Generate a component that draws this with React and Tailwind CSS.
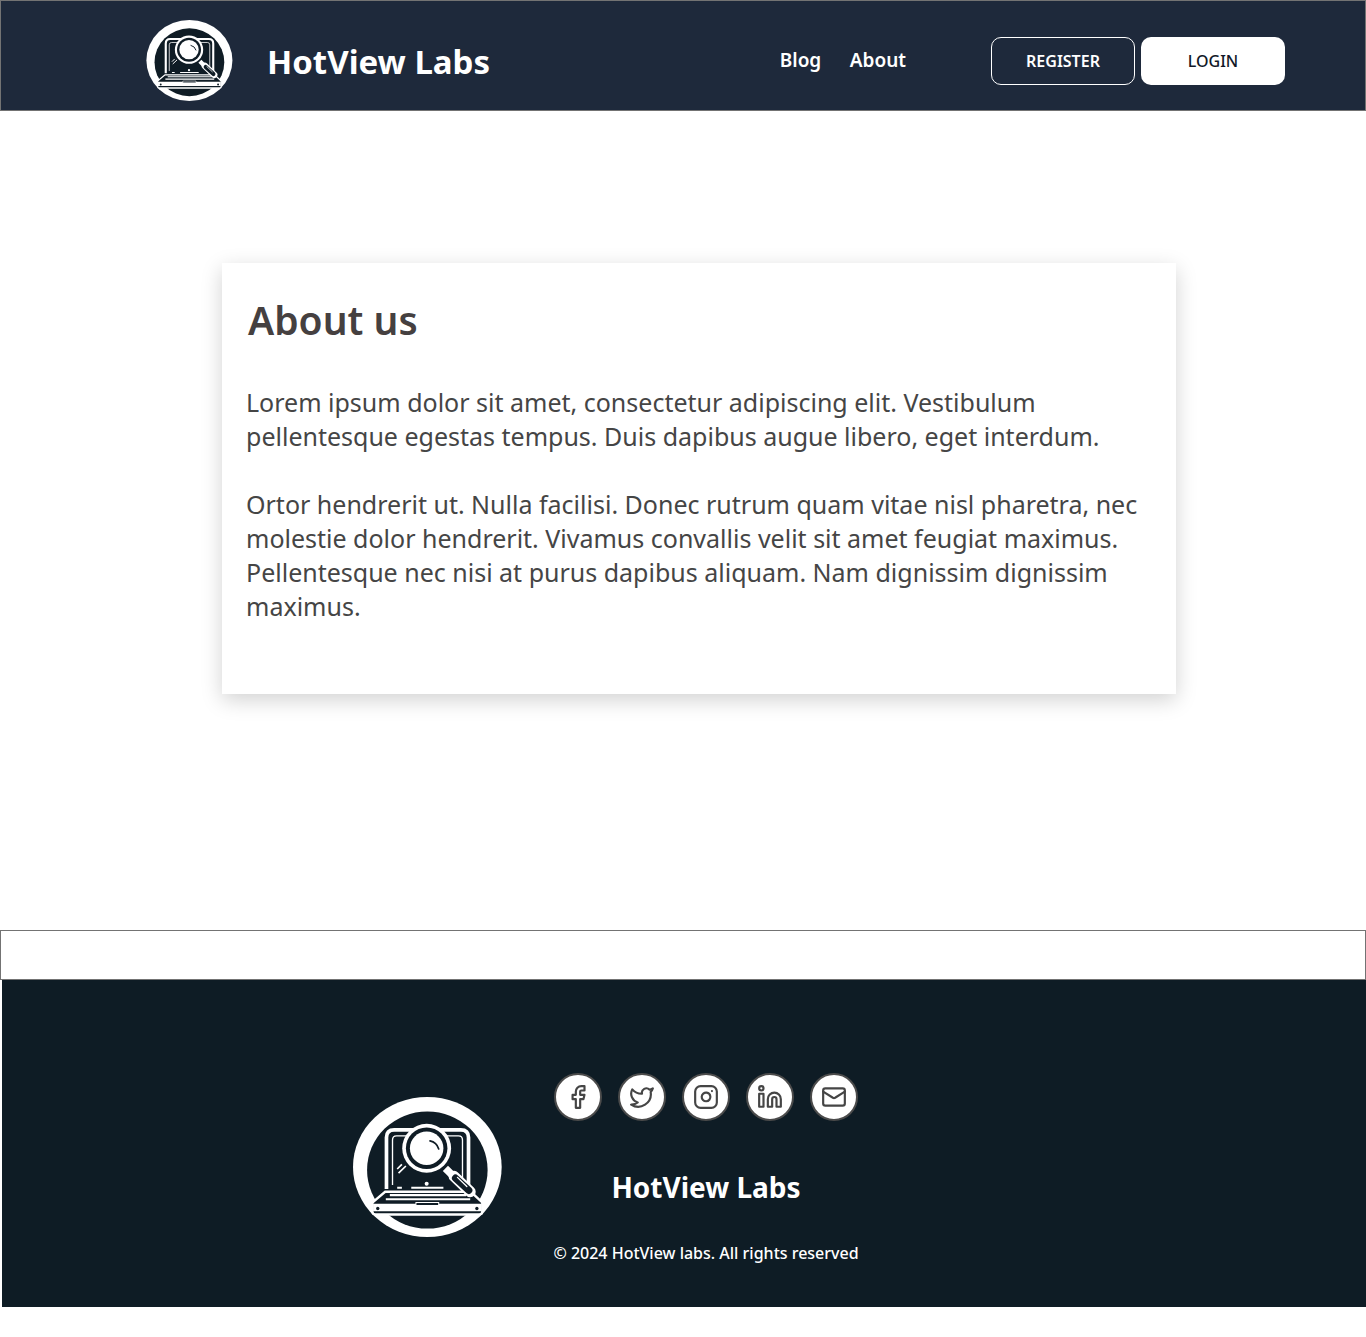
import { Facebook, Twitter, Instagram, Linkedin, Mail } from "lucide-react";

function Logo({ className }) {
    return (
        <svg viewBox="40 37 445 418" className={className}>
            <ellipse cx="262" cy="246" rx="222" ry="209" fill="#fff" />
            <ellipse cx="262" cy="255" rx="180" ry="175" fill="#0f1c25" />
            {/* laptop screen */}
            <path d="M140 312V158Q140 135 163 135H362Q385 135 385 158V312" fill="none" stroke="#fff" strokeWidth="11" />
            <path d="M158 300V165Q158 153 170 153H355Q367 153 367 165V300" fill="none" stroke="#fff" strokeWidth="4" />
            <path d="M176 264L198 243M172 252L186 238" stroke="#fff" strokeWidth="5" />
            <circle cx="260" cy="296" r="6" fill="#fff" />
            <path d="M172 308H186M214 308H310" stroke="#fff" strokeWidth="6" />
            {/* laptop base */}
            <path d="M136 320H392L426 352V380Q426 388 416 388H108Q98 388 98 380V352Z" fill="#0f1c25" stroke="#fff" strokeWidth="7" />
            <path d="M150 330H378M138 342H390" stroke="#fff" strokeWidth="6" />
            <path d="M100 356H424V378H100Z" fill="#fff" />
            <path d="M228 352H296V361H228Z" fill="#0f1c25" stroke="#fff" strokeWidth="3" />
            <circle cx="114" cy="370" r="5" fill="#0f1c25" />
            <circle cx="410" cy="370" r="5" fill="#0f1c25" />
            {/* magnifier */}
            <path d="M316 250L338 272" stroke="#fff" strokeWidth="22" />
            <path d="M342 274L390 320" stroke="#fff" strokeWidth="33" strokeLinecap="round" />
            <path d="M346 279L386 316" stroke="#0f1c25" strokeWidth="21" strokeLinecap="round" />
            <path d="M352 277L380 304" stroke="#fff" strokeWidth="4" strokeLinecap="round" />
            <circle cx="260" cy="190" r="73" fill="#fff" />
            <circle cx="260" cy="190" r="62" fill="#0f1c25" />
            <circle cx="260" cy="190" r="50" fill="#fff" />
            <path d="M270 168Q290 172 296 192" fill="none" stroke="#0f1c25" strokeWidth="5" strokeLinecap="round" />
        </svg>
    );
}

const socials = [Facebook, Twitter, Instagram, Linkedin, Mail];

export default function App() {
    return (
        <div className="min-h-[1337px] bg-white font-['Noto_Sans',sans-serif]">
            <header className="h-[111px] border border-[#737373] bg-[#1e293b] flex items-center pt-[10px] pl-[145px] pr-[80px]">
                <Logo className="w-[87px] h-[81px]" />
                <span className="ml-[34px] mt-[2px] text-[33px] font-bold text-white leading-none">HotView Labs</span>
                <nav className="ml-auto flex gap-[28.5px] text-[19px] font-semibold text-white">
                    <a>Blog</a>
                    <a>About</a>
                </nav>
                <div className="ml-[85px] flex gap-[6px]">
                    <button className="w-[144px] h-[48px] rounded-[10px] border border-white text-white text-base font-semibold">REGISTER</button>
                    <button className="w-[144px] h-[48px] rounded-[10px] bg-white text-[#111827] text-base font-medium">LOGIN</button>
                </div>
            </header>

            <main className="h-[819px] pt-[152px] pl-[222px]">
                <div className="w-[954px] h-[431px] bg-white shadow-[0_6px_20px_rgba(0,0,0,0.18)] pt-[29px] px-[24px]">
                    <h1 className="pl-[2px] text-[39px] leading-[56px] font-semibold text-[#454040]">About us</h1>
                    <div className="mt-[37px] text-[25px] leading-[34px] text-[#454545]">
                        <p>Lorem ipsum dolor sit amet, consectetur adipiscing elit. Vestibulum pellentesque egestas tempus. Duis dapibus augue libero, eget interdum.</p>
                        <p className="mt-[34px]">Ortor hendrerit ut. Nulla facilisi. Donec rutrum quam vitae nisl pharetra, nec molestie dolor hendrerit. Vivamus convallis velit sit amet feugiat maximus. Pellentesque nec nisi at purus dapibus aliquam. Nam dignissim dignissim maximus.</p>
                    </div>
                </div>
            </main>

            <div className="h-[50px] border border-[#737373] bg-white" />

            <footer className="ml-[2px] h-[327px] bg-[#0e1c25] flex pl-[351px] pt-[93px]">
                <Logo className="w-[149px] h-[140px] mt-[24px]" />
                <div className="ml-[52px] w-[304px] flex flex-col items-center">
                    <div className="flex gap-[16px]">
                        {socials.map((Icon, i) => (
                            <span key={i} className="w-[48px] h-[48px] rounded-full bg-white border-2 border-[#4b4b4b] flex items-center justify-center text-[#454545]">
                                <Icon size={26} strokeWidth={2} />
                            </span>
                        ))}
                    </div>
                    <div className="mt-[46px] text-[28px] leading-[40px] font-bold text-white">HotView Labs</div>
                    <div className="mt-[34px] text-base leading-[24px] font-medium text-white whitespace-nowrap">© 2024 HotView labs. All rights reserved</div>
                </div>
            </footer>
        </div>
    );
}
